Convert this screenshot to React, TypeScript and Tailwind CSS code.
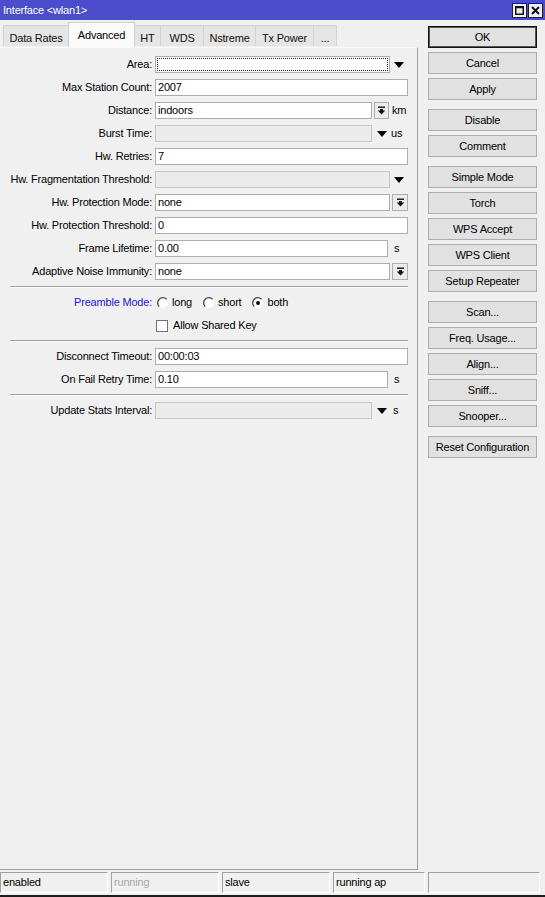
import React from "react";

const FONT = { fontFamily: '"Liberation Sans", Arial, sans-serif' };

function DownTriangle() {
  return (
    <svg width="10" height="6" viewBox="0 0 10 6">
      <polygon points="0,0 10,0 5,6" fill="#000" />
    </svg>
  );
}

function DropBtn({ w = 15 }: { w?: number }) {
  return (
    <div
      className="h-[17px] flex items-center justify-center border border-[#adadad] bg-[#ececec]"
      style={{ width: w }}
    >
      <svg width="9" height="9" viewBox="0 0 9 9">
        <rect x="1" y="0.5" width="7" height="1.4" fill="#111" />
        <polygon points="3,3 6,3 6,4.6 8.3,4.6 4.5,8.6 0.7,4.6 3,4.6" fill="#111" />
      </svg>
    </div>
  );
}

function Field({
  value = "",
  w,
  disabled = false,
}: {
  value?: string;
  w: number;
  disabled?: boolean;
}) {
  return (
    <div
      className={
        "h-[17px] border px-[2px] leading-[15px] whitespace-nowrap overflow-hidden " +
        (disabled ? "bg-[#ebebeb] border-[#c6c6c6]" : "bg-white border-[#abadb3]")
      }
      style={{ width: w }}
    >
      {value}
    </div>
  );
}

function Row({
  label,
  children,
  blue = false,
}: {
  label: string;
  children?: React.ReactNode;
  blue?: boolean;
}) {
  return (
    <div className="flex items-center h-[17px]">
      <div
        className={
          "w-[152px] text-right whitespace-nowrap " + (blue ? "text-[#2222b4]" : "text-black")
        }
      >
        {label}
      </div>
      <div className="ml-[3px] flex items-center">{children}</div>
    </div>
  );
}

function Sep() {
  return (
    <div className="ml-[10px] mr-[9px] my-[6px]">
      <div className="h-px bg-[#a0a0a0]" />
      <div className="h-px bg-white" />
    </div>
  );
}

function Radio({ checked = false }: { checked?: boolean }) {
  return (
    <svg width="12" height="12" viewBox="0 0 12 12">
      <circle cx="6" cy="6" r="5" fill="#fff" />
      <path d="M 2.2 9.6 A 5 5 0 0 1 9.6 2.2" fill="none" stroke="#444" strokeWidth="1.3" />
      {checked && <circle cx="6" cy="6" r="1.9" fill="#000" />}
    </svg>
  );
}

function Btn({ label, primary = false }: { label: string; primary?: boolean }) {
  return (
    <div
      className={
        "w-[109px] h-[22px] flex items-center justify-center bg-[#e1e1e1] border " +
        (primary ? "border-[#111] shadow-[inset_0_0_0_1px_#555]" : "border-[#adadad]")
      }
    >
      {label}
    </div>
  );
}

const tabs: { name: string; w: number }[] = [
  { name: "Data Rates", w: 66 },
  { name: "Advanced", w: 67 },
  { name: "HT", w: 27 },
  { name: "WDS", w: 44 },
  { name: "Nstreme", w: 53 },
  { name: "Tx Power", w: 59 },
  { name: "...", w: 24 },
];

export default function App() {
  return (
    <div
      className="w-[545px] h-[897px] bg-[#f0f0f0] flex flex-col text-[11px] tracking-[-0.2px] text-black overflow-hidden"
      style={FONT}
    >
      {/* title bar */}
      <div className="h-[20px] bg-[#4b4dcc] flex items-center justify-between pl-[3px] pr-[2px]">
        <span className="text-white">Interface &lt;wlan1&gt;</span>
        <div className="flex gap-[1px]">
          <div className="w-[15px] h-[15px] bg-[#f0f0f0] border border-[#222] flex items-center justify-center">
            <svg width="9" height="9" viewBox="0 0 9 9">
              <rect x="0.75" y="0.75" width="7.5" height="7.5" fill="none" stroke="#111" strokeWidth="1.5" />
              <rect x="0.75" y="0.75" width="7.5" height="1.5" fill="#111" />
            </svg>
          </div>
          <div className="w-[15px] h-[15px] bg-[#f0f0f0] border border-[#222] flex items-center justify-center">
            <svg width="9" height="9" viewBox="0 0 9 9">
              <path d="M1 1 L8 8 M8 1 L1 8" stroke="#111" strokeWidth="2" />
            </svg>
          </div>
        </div>
      </div>

      {/* body */}
      <div className="h-[850px] flex">
        <div className="w-[418px] flex flex-col">
          {/* tabs */}
          <div className="h-[27px] flex items-end pl-[3px]">
            {tabs.map((t) => {
              const sel = t.name === "Advanced";
              return (
                <div
                  key={t.name}
                  className={
                    "flex justify-center whitespace-nowrap border border-b-0 -mr-px " +
                    (sel
                      ? "h-[25px] pt-[4px] bg-[#fafafa] border-[#d0d0d0] relative z-10"
                      : "h-[21px] pt-[4px] mb-px bg-[#e5e5e5] border-[#d3d3d3] text-[#111]")
                  }
                  style={{ width: t.w }}
                >
                  {t.name}
                </div>
              );
            })}
          </div>

          {/* tab panel */}
          <div className="flex-1 border-r border-b border-[#a0a0a0] border-t border-t-[#fafafa] bg-[#f0f0f0] pt-[8px]">
            <div className="flex flex-col gap-[6px]">
              <Row label="Area:">
                <div className="w-[235px] h-[17px] bg-white border border-[#abadb3] p-[1px]">
                  <div className="w-full h-full border border-dotted border-[#222]" />
                </div>
                <div className="w-[18px] flex justify-center">
                  <DownTriangle />
                </div>
              </Row>
              <Row label="Max Station Count:">
                <Field w={253} value="2007" />
              </Row>
              <Row label="Distance:">
                <Field w={217} value="indoors" />
                <div className="ml-[2px]">
                  <DropBtn />
                </div>
                <span className="ml-[3px]">km</span>
              </Row>
              <Row label="Burst Time:">
                <Field w={217} disabled />
                <div className="w-[19px] flex justify-center">
                  <DownTriangle />
                </div>
                <span>us</span>
              </Row>
              <Row label="Hw. Retries:">
                <Field w={253} value="7" />
              </Row>
              <Row label="Hw. Fragmentation Threshold:">
                <Field w={235} disabled />
                <div className="w-[18px] flex justify-center">
                  <DownTriangle />
                </div>
              </Row>
              <Row label="Hw. Protection Mode:">
                <Field w={235} value="none" />
                <div className="ml-[2px]">
                  <DropBtn w={16} />
                </div>
              </Row>
              <Row label="Hw. Protection Threshold:">
                <Field w={253} value="0" />
              </Row>
              <Row label="Frame Lifetime:">
                <Field w={233} value="0.00" />
                <span className="ml-[6px]">s</span>
              </Row>
              <Row label="Adaptive Noise Immunity:">
                <Field w={235} value="none" />
                <div className="ml-[2px]">
                  <DropBtn w={16} />
                </div>
              </Row>
            </div>

            <Sep />

            <div className="flex flex-col gap-[6px]">
              <Row label="Preamble Mode:" blue>
                <div className="flex items-center ml-[2px]">
                  <Radio />
                  <span className="ml-[3px]">long</span>
                  <span className="ml-[11px]">
                    <Radio />
                  </span>
                  <span className="ml-[3px]">short</span>
                  <span className="ml-[11px]">
                    <Radio checked />
                  </span>
                  <span className="ml-[3px]">both</span>
                </div>
              </Row>
              <Row label="">
                <div className="flex items-center ml-[1px]">
                  <div className="w-[12px] h-[12px] bg-white border border-[#707070]" />
                  <span className="ml-[5px]">Allow Shared Key</span>
                </div>
              </Row>
            </div>

            <Sep />

            <div className="flex flex-col gap-[6px]">
              <Row label="Disconnect Timeout:">
                <Field w={253} value="00:00:03" />
              </Row>
              <Row label="On Fail Retry Time:">
                <Field w={233} value="0.10" />
                <span className="ml-[6px]">s</span>
              </Row>
            </div>

            <Sep />

            <Row label="Update Stats Interval:">
              <Field w={217} disabled />
              <div className="w-[19px] flex justify-center">
                <DownTriangle />
              </div>
              <span className="ml-[2px]">s</span>
            </Row>
          </div>
        </div>

        {/* command buttons */}
        <div className="flex-1 pl-[10px] pt-[6px] flex flex-col">
          <div className="flex flex-col gap-[4px]">
            <Btn label="OK" primary />
            <Btn label="Cancel" />
            <Btn label="Apply" />
          </div>
          <div className="flex flex-col gap-[4px] mt-[9px]">
            <Btn label="Disable" />
            <Btn label="Comment" />
          </div>
          <div className="flex flex-col gap-[4px] mt-[9px]">
            <Btn label="Simple Mode" />
            <Btn label="Torch" />
            <Btn label="WPS Accept" />
            <Btn label="WPS Client" />
            <Btn label="Setup Repeater" />
          </div>
          <div className="flex flex-col gap-[4px] mt-[9px]">
            <Btn label="Scan..." />
            <Btn label="Freq. Usage..." />
            <Btn label="Align..." />
            <Btn label="Sniff..." />
            <Btn label="Snooper..." />
          </div>
          <div className="flex flex-col gap-[4px] mt-[9px]">
            <Btn label="Reset Configuration" />
          </div>
        </div>
      </div>

      {/* status bar */}
      <div className="h-[25px] pt-[2px] pb-[2px] flex gap-[3px]">
        {[
          { t: "enabled", w: 108, dim: false },
          { t: "running", w: 108, dim: true },
          { t: "slave", w: 108, dim: false },
          { t: "running ap", w: 92, dim: false },
          { t: "", w: 112, dim: false },
        ].map((c, i) => (
          <div
            key={i}
            className={
              "h-[21px] flex items-center pl-[2px] border-t border-l border-[#a0a0a0] border-b border-r border-b-white border-r-white " +
              (c.dim ? "text-[#a8a8a8]" : "text-black")
            }
            style={{ width: c.w }}
          >
            {c.t}
          </div>
        ))}
      </div>
      <div className="h-[2px] bg-[#1c1c1c]" />
    </div>
  );
}
